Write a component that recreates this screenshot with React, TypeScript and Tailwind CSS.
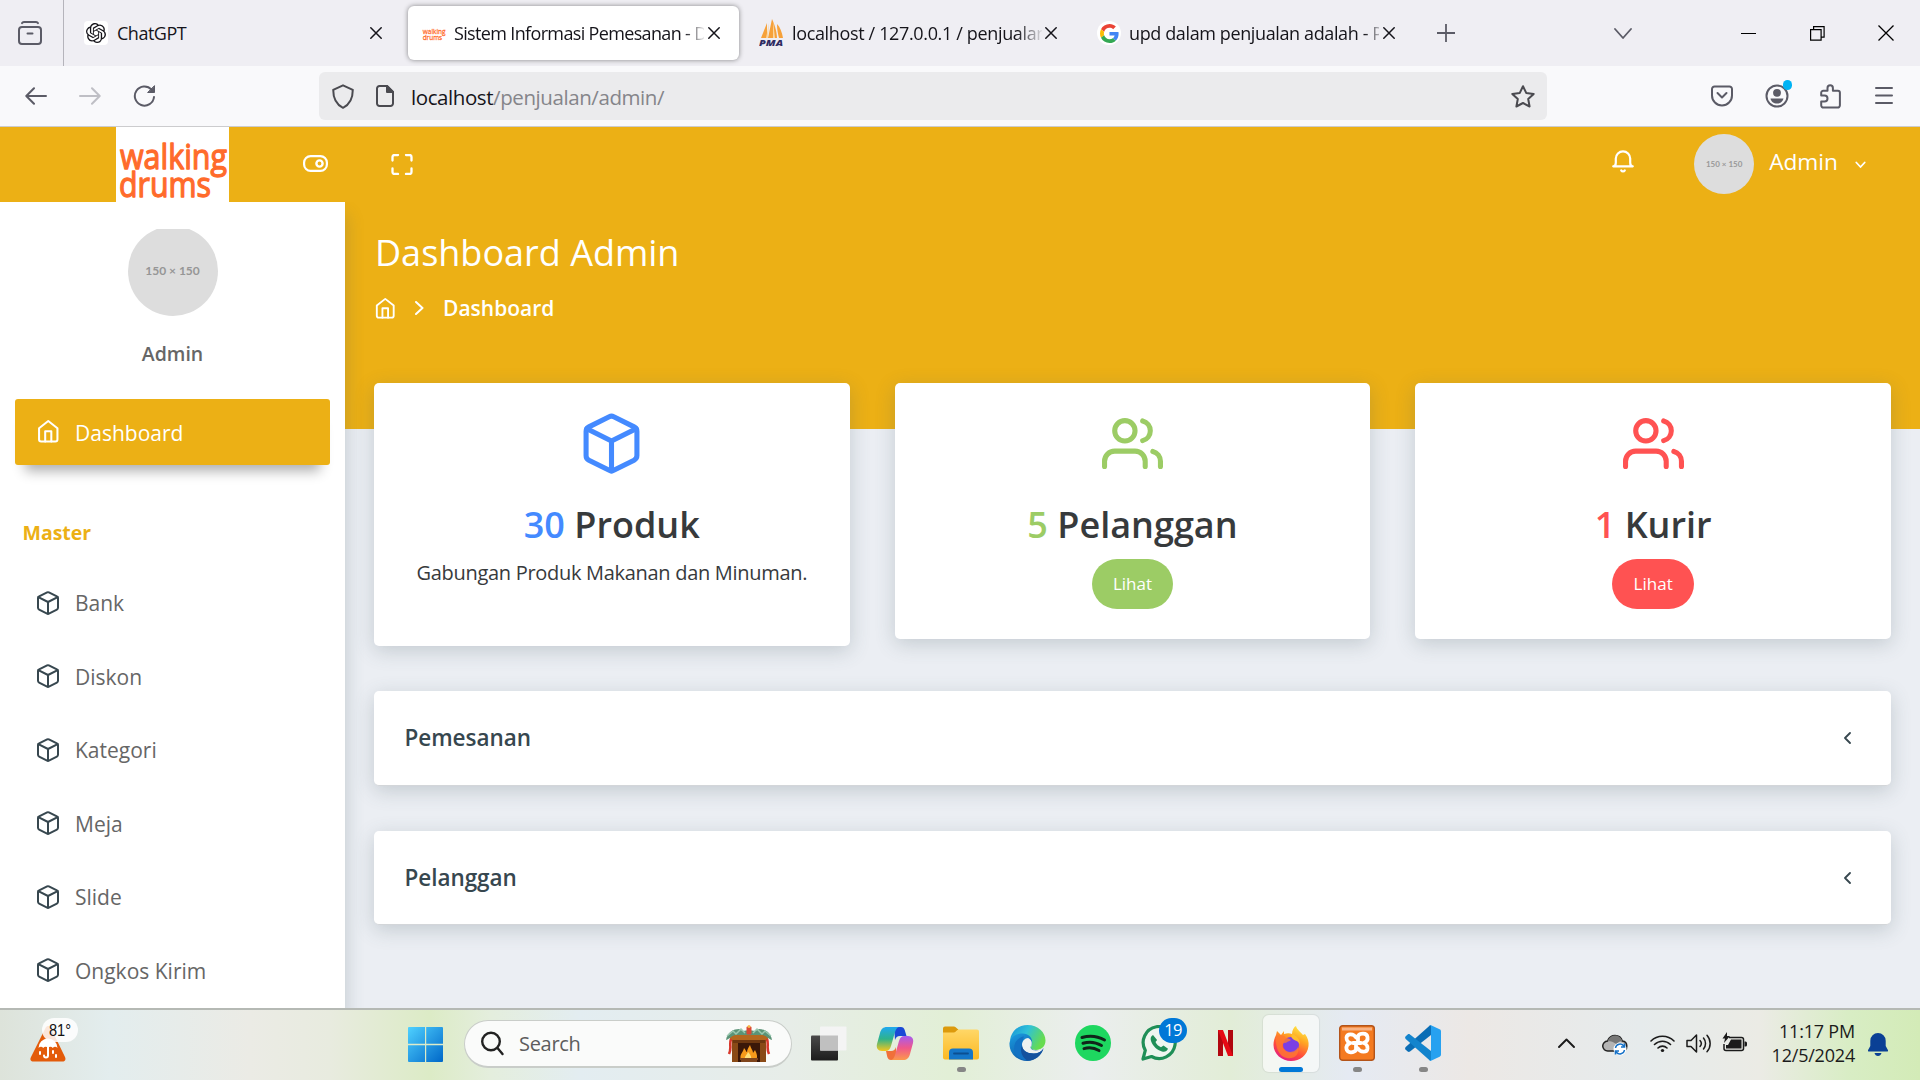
import React from 'react';

type IconProps = { size?: number; className?: string };

const Feather = ({ size = 24, className = '', sw = 2, children }: IconProps & { sw?: number; children: React.ReactNode }) => (
  <svg width={size} height={size} viewBox="0 0 24 24" fill="none" stroke="currentColor" strokeWidth={sw} strokeLinecap="round" strokeLinejoin="round" className={`shrink-0 ${className}`}>
    {children}
  </svg>
);

const BoxIcon = (p: IconProps) => (
  <Feather {...p}>
    <path d="M12.89 1.45l8 4A2 2 0 0 1 22 7.24v9.53a2 2 0 0 1-1.11 1.79l-8 4a2 2 0 0 1-1.79 0l-8-4a2 2 0 0 1-1.1-1.8V7.24a2 2 0 0 1 1.11-1.79l8-4a2 2 0 0 1 1.78 0z" />
    <path d="M2.32 6.16L12 11l9.68-4.84M12 22.76V11" />
  </Feather>
);

const HomeIcon = (p: IconProps) => (
  <Feather {...p}>
    <path d="M3 9l9-7 9 7v11a2 2 0 0 1-2 2H5a2 2 0 0 1-2-2z" />
    <path d="M9 22V12h6v10" />
  </Feather>
);

const UsersIcon = (p: IconProps) => (
  <Feather {...p}>
    <path d="M17 21v-2a4 4 0 0 0-4-4H5a4 4 0 0 0-4 4v2" />
    <circle cx="9" cy="7" r="4" />
    <path d="M23 21v-2a4 4 0 0 0-3-3.87M16 3.13a4 4 0 0 1 0 7.75" />
  </Feather>
);

const TabClose = ({ className = '' }: { className?: string }) => (
  <svg width="12" height="12" viewBox="0 0 12 12" className={`shrink-0 ${className}`} stroke="#15141a" strokeWidth="1.5" strokeLinecap="round">
    <path d="M.8.8l10.4 10.4M11.2.8L.8 11.2" />
  </svg>
);

const BrandLogo = ({ w, h, className = '' }: { w: number; h: number; className?: string }) => (
  <svg width={w} height={h} viewBox="0 0 113 75" className={`shrink-0 ${className}`} fill="#ff6b2b" stroke="#ff6b2b" strokeWidth="1.3" strokeLinejoin="round" fontFamily="Open Sans, sans-serif" fontWeight="500" fontSize="35.5">
    <text x="4" y="42" textLength="107" lengthAdjust="spacingAndGlyphs">walking</text>
    <text x="3" y="70" textLength="92" lengthAdjust="spacingAndGlyphs">drums</text>
  </svg>
);

function TabStrip() {
  return (
    <div className="flex h-[66px] items-center bg-[#efeef3] text-[18px] text-[#15141a]">
      <div className="flex h-full w-16 items-center border-r border-[#b5b4bb] pl-[18px]">
        <svg width="24" height="24" viewBox="0 0 24 24" fill="none" stroke="#5b5b66" strokeWidth="2" strokeLinecap="round">
          <path d="M4 2.200c.4-.9 1-1.200 2-1.200h12c1 0 1.600.3 2 1.200" />
          <rect x="1" y="6" width="22" height="17" rx="3" />
          <path d="M9.500 12.500h5" />
        </svg>
      </div>
      <div className="ml-5 flex w-[324px] items-center">
        <div className="grid h-6 w-6 shrink-0 place-items-center rounded bg-white">
          <svg width="20" height="20" viewBox="0 0 24 24" fill="#15141a">
            <path d="M22.282 9.821a5.985 5.985 0 0 0-.516-4.910 6.046 6.046 0 0 0-6.510-2.900A6.065 6.065 0 0 0 4.981 4.180a5.985 5.985 0 0 0-3.998 2.900 6.046 6.046 0 0 0 .743 7.097 5.980 5.980 0 0 0 .510 4.911 6.051 6.051 0 0 0 6.515 2.900A5.985 5.985 0 0 0 13.260 24a6.056 6.056 0 0 0 5.772-4.206 5.990 5.990 0 0 0 3.997-2.900 6.056 6.056 0 0 0-.747-7.073zM13.260 22.430a4.476 4.476 0 0 1-2.876-1.040l.141-.081 4.779-2.758a.795.795 0 0 0 .392-.681v-6.737l2.020 1.168a.071.071 0 0 1 .038.052v5.583a4.504 4.504 0 0 1-4.494 4.494zM3.600 18.304a4.470 4.470 0 0 1-.535-3.014l.142.085 4.783 2.759a.771.771 0 0 0 .780 0l5.843-3.369v2.332a.080.080 0 0 1-.033.062L9.740 19.950a4.500 4.500 0 0 1-6.140-1.646zM2.340 7.896a4.485 4.485 0 0 1 2.366-1.973V11.600a.766.766 0 0 0 .388.676l5.815 3.355-2.020 1.168a.076.076 0 0 1-.071 0l-4.830-2.786A4.504 4.504 0 0 1 2.340 7.872zm16.597 3.855l-5.833-3.387L15.119 7.200a.076.076 0 0 1 .071 0l4.830 2.791a4.494 4.494 0 0 1-.676 8.105v-5.678a.790.790 0 0 0-.407-.667zm2.010-3.023l-.141-.085-4.774-2.782a.776.776 0 0 0-.785 0L9.409 9.230V6.897a.066.066 0 0 1 .028-.061l4.830-2.787a4.500 4.500 0 0 1 6.680 4.660zm-12.640 4.135l-2.020-1.164a.080.080 0 0 1-.038-.057V6.075a4.500 4.500 0 0 1 7.375-3.453l-.142.080L8.704 5.460a.795.795 0 0 0-.393.681zm1.097-2.365l2.602-1.500 2.607 1.500v2.999l-2.597 1.500-2.607-1.500z" />
          </svg>
        </div>
        <span className="ml-[9px] flex-1 tracking-[-0.5px]">ChatGPT</span>
        <TabClose className="mr-[26px]" />
      </div>
      <div className="flex h-[54px] w-[331px] items-center rounded-[6px] bg-white pl-[14px] shadow-[0_0_5px_rgba(0,0,0,0.45)]">
        <BrandLogo w={24} h={16} />
        <span className="ml-2 w-[250px] overflow-hidden whitespace-nowrap tracking-[-0.65px] [mask-image:linear-gradient(to_right,#000_230px,transparent_252px)]">Sistem Informasi Pemesanan - D</span>
        <TabClose className="ml-1" />
      </div>
      <div className="ml-5 flex w-[320px] items-center">
        <svg width="25" height="28" viewBox="0 0 25 28" className="shrink-0">
          <path d="M8 4L2 19h6zM13 0L9 19h9C18 12 15 4 13 0zM18 5c0 6 1 10 2 14h4C23 13 21 8 18 5z" fill="#f6a13a" />
          <path d="M10 4L7 19h2zM14 2v17h2z" fill="#fbd6a0" />
          <text x="0" y="27" fontSize="9.500" fontWeight="800" fontStyle="italic" fontFamily="Open Sans, sans-serif" fill="#2f2c62" textLength="24" lengthAdjust="spacingAndGlyphs">PMA</text>
        </svg>
        <span className="ml-2 w-[250px] overflow-hidden whitespace-nowrap tracking-[-0.35px] [mask-image:linear-gradient(to_right,#000_225px,transparent_252px)]">localhost / 127.0.0.1 / penjualan</span>
        <TabClose className="ml-[3px]" />
      </div>
      <div className="ml-[18px] flex w-[320px] items-center">
        <div className="grid h-6 w-6 shrink-0 place-items-center rounded-full bg-white">
          <svg width="19" height="19" viewBox="0 0 48 48">
            <path fill="#ea4335" d="M24 9.500c3.540 0 6.710 1.220 9.210 3.600l6.850-6.850C35.900 2.380 30.470 0 24 0 14.620 0 6.510 5.380 2.560 13.220l7.980 6.190C12.430 13.720 17.740 9.500 24 9.500z" />
            <path fill="#4285f4" d="M46.980 24.550c0-1.570-.15-3.090-.38-4.550H24v9.020h12.940c-.58 2.960-2.260 5.480-4.780 7.180l7.730 6c4.510-4.180 7.090-10.360 7.090-17.650z" />
            <path fill="#fbbc05" d="M10.530 28.590c-.48-1.450-.76-2.990-.76-4.590s.27-3.140.76-4.590l-7.980-6.190C.92 16.460 0 20.120 0 24s.92 7.540 2.560 10.780l7.970-6.190z" />
            <path fill="#34a853" d="M24 48c6.480 0 11.930-2.130 15.890-5.810l-7.730-6c-2.150 1.450-4.920 2.300-8.160 2.300-6.260 0-11.570-4.220-13.470-9.910l-7.980 6.190C6.510 42.620 14.620 48 24 48z" />
          </svg>
        </div>
        <span className="ml-2 w-[250px] overflow-hidden whitespace-nowrap tracking-[-0.38px] [mask-image:linear-gradient(to_right,#000_235px,transparent_256px)]">upd dalam penjualan adalah - P</span>
        <TabClose className="ml-1" />
      </div>
      <svg width="18" height="18" viewBox="0 0 18 18" className="ml-[20px] shrink-0" stroke="#5b5b66" strokeWidth="1.800"><path d="M9 0v18M0 9h18" /></svg>
      <svg width="18" height="11" viewBox="0 0 18 11" className="ml-[159px] shrink-0" stroke="#5b5b66" strokeWidth="1.800" fill="none" strokeLinecap="round" strokeLinejoin="round"><path d="M1 1l8 9 8-9" /></svg>
      <div className="ml-[109px] h-px w-[15px] shrink-0 bg-black" />
      <svg width="15" height="15" viewBox="0 0 15 15" className="ml-[54px] shrink-0" stroke="#000" strokeWidth="1.200" fill="none"><path d="M.6 3.600h10.500v10.500H.6zM3.600 3.600V.6h10.500v10.500h-3" /></svg>
      <svg width="16" height="16" viewBox="0 0 16 16" className="ml-[53px] shrink-0" stroke="#000" strokeWidth="1.300"><path d="M.5.500l15 15M15.500.500l-15 15" /></svg>
    </div>
  );
}

function Toolbar() {
  return (
    <div className="flex h-[61px] items-center border-b border-[#ccccce] bg-[#f9f9fb] text-[#5b5b66]">
      <svg width="22" height="18" viewBox="0 0 22 18" className="ml-[25px] shrink-0" stroke="currentColor" strokeWidth="2" fill="none" strokeLinecap="round" strokeLinejoin="round"><path d="M21 9H1.500M9 1.200L1.300 9 9 16.800" /></svg>
      <svg width="22" height="18" viewBox="0 0 22 18" className="ml-8 shrink-0 text-[#bfbfc5]" stroke="currentColor" strokeWidth="2" fill="none" strokeLinecap="round" strokeLinejoin="round"><path d="M1 9h19.500M13 1.200L20.700 9 13 16.800" /></svg>
      <svg width="23" height="22" viewBox="0 0 23 22" className="ml-8 shrink-0" stroke="currentColor" strokeWidth="2" fill="none" strokeLinecap="round"><path d="M18.500 4.500A9.600 9.600 0 1 0 21 12" /><path d="M21.500 1v6.500H15z" fill="currentColor" strokeWidth="1" strokeLinejoin="round" /></svg>
      <div className="ml-[163px] flex h-12 w-[1228px] items-center rounded-[6px] bg-[#ebebed] pl-[13px] text-[#4a4a50]">
        <svg width="22" height="25" viewBox="0 0 22 25" className="shrink-0" stroke="currentColor" strokeWidth="2" fill="none" strokeLinejoin="round"><path d="M11 1.300L1.200 5.800C1.200 14 4 20.500 11 23.800 18 20.500 20.800 14 20.800 5.800z" /></svg>
        <svg width="18" height="22" viewBox="0 0 18 22" className="ml-[22px] shrink-0" stroke="currentColor" strokeWidth="2" fill="none" strokeLinejoin="round"><path d="M3.500 1H11l6 6v11.500a2.500 2.500 0 0 1-2.500 2.500h-11A2.500 2.500 0 0 1 1 18.500v-15A2.500 2.500 0 0 1 3.500 1z" /><path d="M11 1v6h6z" fill="currentColor" /></svg>
        <div className="ml-[17px] flex-1 pt-[2px] text-[20.500px] tracking-[-0.42px] text-[#85858a]"><span className="text-[#15141a]">localhost</span>/penjualan/admin/</div>
        <svg width="24" height="23" viewBox="0 0 24 23" className="mr-3 shrink-0" stroke="currentColor" strokeWidth="2" fill="none" strokeLinejoin="round"><path d="M12 1.200l3.200 6.700 7.500 1-5.500 5.100 1.400 7.500L12 18l-6.600 3.500L6.800 14 1.300 8.900l7.500-1z" /></svg>
      </div>
      <svg width="22" height="22" viewBox="0 0 22 22" className="ml-[164px] shrink-0" stroke="currentColor" strokeWidth="2" fill="none" strokeLinecap="round" strokeLinejoin="round"><path d="M3.500 1.500h15A2.500 2.500 0 0 1 21 4v6.500a10 10 0 0 1-20 0V4a2.500 2.500 0 0 1 2.500-2.500z" /><path d="M6.500 8l4.500 4.500L15.500 8" /></svg>
      <div className="relative ml-8 h-6 w-6 shrink-0">
        <svg width="24" height="24" viewBox="0 0 24 24" fill="none"><circle cx="12" cy="12" r="10.500" stroke="currentColor" strokeWidth="2" /><circle cx="12" cy="8.800" r="3.900" fill="currentColor" /><path d="M5.500 14.500h13c-.5 3-3 5-6.500 5s-6-2-6.500-5z" fill="currentColor" /></svg>
        <div className="absolute -top-[4px] left-[18px] h-[10px] w-[9px] rounded-full bg-[#00b3f4]" />
      </div>
      <svg width="21" height="25" viewBox="0 0 21 25" className="ml-[31px] shrink-0" stroke="currentColor" strokeWidth="2" fill="none" strokeLinejoin="round"><path d="M1.200 11.500V8.800a2 2 0 0 1 2-2h4.300V4a2.700 2.700 0 0 1 5.400 0v2.800h5a2 2 0 0 1 2 2v12.500a2.300 2.300 0 0 1-2.300 2.300H3.500a2.300 2.300 0 0 1-2.300-2.300v-3.800h3.300a3 3 0 0 0 0-6z" /></svg>
      <svg width="18" height="18" viewBox="0 0 18 18" className="ml-[34px] shrink-0" stroke="currentColor" strokeWidth="2" strokeLinecap="round"><path d="M1 1h16M1 8.500h16M1 16h16" /></svg>
    </div>
  );
}

const NAV = ['Bank', 'Diskon', 'Kategori', 'Meja', 'Slide', 'Ongkos Kirim'];

function Sidebar() {
  return (
    <aside className="relative z-10 flex w-[345px] shrink-0 flex-col bg-white shadow-[1px_14px_16px_1px_rgba(69,90,100,0.22)]">
      <div className="mx-auto mt-[27px] h-[87px] w-[90px] overflow-hidden">
        <div className="-mt-[3px] grid h-[90px] w-[90px] place-items-center rounded-full bg-[#ddd] font-[Lato] text-[12px] font-bold text-[#969696]">150 × 150</div>
      </div>
      <div className="mt-[23px] text-center text-[19.500px] leading-[30px] font-semibold text-[#666]">Admin</div>
      <div className="mx-[15px] mt-[30px] flex h-[66px] items-center rounded-[3px] bg-[#ecb015] pl-[21px] text-[21px] text-white shadow-[0_16px_12px_-10px_rgba(0,0,0,0.32)]">
        <HomeIcon size={24.5} className="mt-[-1px]" />
        <span className="ml-[14.500px] pt-[3px]">Dashboard</span>
      </div>
      <div className="mt-[53px] mb-[19px] pl-[22.500px] text-[19.500px] leading-[30px] font-bold text-[#ecb015]">Master</div>
      {NAV.map((n) => (
        <div key={n} className="flex h-[73.5px] shrink-0 items-center pl-9 text-[21px] text-[#666]">
          <BoxIcon size={24} className="mt-[-2px] text-[#37474f]" />
          <span className="ml-[15px]">{n}</span>
        </div>
      ))}
    </aside>
  );
}

const cardShadow = 'shadow-[0_5px_20px_rgba(69,90,100,0.24)]';

function StatCard({ count, label, tone, icon, children, tall }: { count: string; label: string; tone: string; icon: React.ReactNode; children: React.ReactNode; tall?: boolean }) {
  return (
    <div className={`flex flex-col items-center rounded-[5px] bg-white pt-[30px] ${tall ? 'h-[263px]' : 'h-[256px]'} ${cardShadow}`}>
      <div className={`h-[61px] ${tone}`}>{icon}</div>
      <div className="mt-[30px] text-[36px] leading-[42px] font-semibold text-[#373a3c]">
        <span className={tone}>{count}</span> {label}
      </div>
      {children}
    </div>
  );
}

function Panel({ title, height }: { title: string; height: string }) {
  return (
    <div className={`flex ${height} items-center justify-between rounded-[5px] border-b border-[#d3d6d9] bg-white pr-[39.500px] pl-[30.500px] ${cardShadow}`}>
      <h5 className="text-[22.500px] font-semibold tracking-[-0.05px] text-[#37474f]">{title}</h5>
      <svg width="9" height="12" viewBox="0 0 9 12" fill="none" stroke="#37474f" strokeWidth="1.800" strokeLinecap="round" strokeLinejoin="round"><path d="M7 1L2 6l5 5" /></svg>
    </div>
  );
}

function Main() {
  return (
    <main className="min-w-0 flex-1 bg-[linear-gradient(#ecb015_227px,#ebeef3_227px)] pr-[29px] pl-[29px]">
      <h1 className="pt-[25px] pl-px text-[36px] leading-[52px] font-normal text-white">Dashboard Admin</h1>
      <div className="mt-[14px] flex h-[30px] items-center text-white">
        <HomeIcon size={22.5} />
        <svg width="9" height="14" viewBox="0 0 9 14" className="ml-[18.500px]" fill="none" stroke="currentColor" strokeWidth="2" strokeLinecap="round" strokeLinejoin="round"><path d="M1 1l6.500 6L1 13" /></svg>
        <span className="ml-[19px] pt-[2px] text-[21px] font-semibold">Dashboard</span>
      </div>
      <div className="mt-[60px] grid grid-cols-3 items-start gap-x-[45px]">
        <StatCard count="30" label="Produk" tone="text-[#448aff]" icon={<BoxIcon size={61} />} tall>
          <p className="mt-[12px] text-[20px] leading-[30px] tracking-[-0.3px] text-[#373a3c]">Gabungan Produk Makanan dan Minuman.</p>
        </StatCard>
        <StatCard count="5" label="Pelanggan" tone="text-[#9ccc65]" icon={<UsersIcon size={61} />}>
          <button className="mt-[13px] h-[50px] w-[81px] rounded-full bg-[#9ccc65] text-[17px] text-white">Lihat</button>
        </StatCard>
        <StatCard count="1" label="Kurir" tone="text-[#ff5252]" icon={<UsersIcon size={61} />}>
          <button className="mt-[13px] h-[50px] w-[82px] rounded-full bg-[#ff5252] text-[17px] text-white">Lihat</button>
        </StatCard>
      </div>
      <div className="mt-[45px] flex flex-col gap-[45px]">
        <Panel title="Pemesanan" height="h-[95px]" />
        <Panel title="Pelanggan" height="h-[94px]" />
      </div>
    </main>
  );
}

function AppHeader() {
  return (
    <header className="flex h-[75px] shrink-0 bg-[#ecb015] text-white">
      <div className="flex w-[345px] pl-[116px]">
        <BrandLogo w={113} h={75} className="bg-white" />
        <svg width="25" height="17" viewBox="0 0 25 17" className="mt-[28px] ml-[73.500px] shrink-0" fill="none" stroke="currentColor" strokeWidth="2.200"><rect x="1.100" y="1.100" width="22.800" height="14.800" rx="6.500" /><circle cx="16.500" cy="8.500" r="3.100" strokeWidth="2.400" /></svg>
      </div>
      <svg width="22" height="21" viewBox="0 0 22 21" className="mt-[27px] ml-[45.500px] shrink-0" fill="none" stroke="currentColor" strokeWidth="2.300" strokeLinecap="round"><path d="M1.500 6.500V3a2 2 0 0 1 2-2H7M15 1h3.500a2 2 0 0 1 2 2v3.500M20.500 14.500V18a2 2 0 0 1-2 2H15M7 20H3.500a2 2 0 0 1-2-2v-3.500" /></svg>
      <svg width="22" height="23" viewBox="0 0 22 23" className="mt-[23px] ml-auto shrink-0" fill="none" stroke="currentColor" strokeWidth="2.200" strokeLinecap="round" strokeLinejoin="round"><path d="M1.200 16.300c1.800 0 2.600-1.500 2.600-3.500V8.500a7.200 7.200 0 0 1 14.400 0v4.300c0 2 .8 3.500 2.600 3.500zM9.200 20.400c.9 1.400 2.700 1.400 3.600 0" /></svg>
      <div className="mt-[7px] ml-[60px] grid h-[60px] w-[60px] place-items-center rounded-full bg-[#ddd] font-[Lato] text-[8px] font-bold text-[#999]">150 × 150</div>
      <span className="mt-[16px] ml-[15px] text-[22.700px] leading-[38px]">Admin</span>
      <svg width="11" height="8" viewBox="0 0 11 8" className="mt-[34px] mr-[54px] ml-[17px] shrink-0" fill="none" stroke="currentColor" strokeWidth="1.800" strokeLinecap="round" strokeLinejoin="round"><path d="M1.300 1.500l4.200 4.500 4.200-4.500" /></svg>
    </header>
  );
}

const Cell = ({ children, dot, active }: { children: React.ReactNode; dot?: boolean; active?: boolean }) => (
  <div className={`relative mx-[5px] mt-[5px] flex h-[57px] w-14 shrink-0 items-center justify-center rounded-[6px] pb-px ${active ? 'bg-white/60 shadow-[0_0_1px_1px_rgba(0,0,0,0.06)]' : ''}`}>
    {children}
    {dot && <div className="absolute bottom-0 left-6 h-[5px] w-[9px] rounded-full bg-[#868686]" />}
    {active && <div className="absolute bottom-0 left-4 h-[5px] w-6 rounded-full bg-[#0078d7]" />}
  </div>
);

function Taskbar() {
  return (
    <footer className="flex h-[72px] shrink-0 items-start border-t-2 border-[#b5b9b4] bg-[linear-gradient(to_right,#dde3da_0px,#e3edee_110px,#ebebe5_250px,#e8ebdf_330px,#dcebc6_430px,#e4eedd_490px,#e3edf1_580px,#e7ede8_790px,#e2efd6_950px,#ebeeee_1090px,#e2edd7_1230px,#e5eaf3_1350px,#ece8e5_1470px,#e6ebec_1640px,#ebebe5_1760px,#d8edc4_1850px,#d3ebb7_1920px)]">
      <svg width="52" height="50" viewBox="0 0 52 50" className="mt-[4px] ml-7 shrink-0">
        <path d="M17.500 14c1.400-2.600 4-2.600 5.400 0L37 43c1.200 2.500 0 4.500-2.500 4.500h-29C2.800 47.500 1.600 45.500 3 43z" fill="#e35b0a" />
        <path d="M10.500 34a9.500 9.500 0 0 1 19 0c-1.500-1.700-3.500-1.700-4.700 0-1.300-1.700-3.500-1.700-4.800 0-1.300-1.700-3.500-1.700-4.800 0-1.200-1.700-3.200-1.700-4.700 0z" fill="#fff" />
        <path d="M20 33v8.500a2 2 0 0 1-4 0M12 38v2M25 37v2M28 41v2" stroke="#fff" strokeWidth="2" fill="none" strokeLinecap="round" />
        <rect x="14" y="4" width="36" height="24" rx="12" fill="#fff" fillOpacity=".85" />
        <text x="21" y="21.500" fontSize="16" fontFamily="Liberation Sans, sans-serif" fill="#111" textLength="22" lengthAdjust="spacingAndGlyphs">81°</text>
      </svg>
      <svg width="35" height="35" viewBox="0 0 35 35" className="mt-[17px] ml-[328px] shrink-0">
        <defs><linearGradient id="win" x1="0" y1="0" x2="1" y2="1"><stop offset="0" stopColor="#4fd1ff" /><stop offset="1" stopColor="#0067c8" /></linearGradient></defs>
        <path d="M1 0h16v16.700H0V1a1 1 0 0 1 1-1zM18.200 0H34a1 1 0 0 1 1 1v15.700H18.200zM0 18.200h17V35H1a1 1 0 0 1-1-1zM18.200 18.200H35V34a1 1 0 0 1-1 1H18.200z" fill="url(#win)" />
      </svg>
      <div className="mt-[10px] ml-[21px] flex h-[48px] w-[328px] shrink-0 items-center rounded-full border border-b-2 border-[#c9cdc9] bg-[#fafbfa] pl-[15px]">
        <svg width="24" height="25" viewBox="0 0 24 25" fill="none" stroke="#222" strokeWidth="2.400" strokeLinecap="round"><circle cx="11" cy="10.500" r="8.800" /><path d="M17.500 17l5 6" /></svg>
        <span className="ml-[15px] flex-1 pt-px text-[20px] tracking-[-0.3px] text-[#5d5d5d]">Search</span>
        <svg width="48" height="38" viewBox="0 0 48 38" className="mr-[18px] shrink-0">
          <rect x="7" y="10" width="34" height="27" fill="#8a4a16" />
          <rect x="5" y="9" width="38" height="6" rx="1" fill="#b4681f" />
          <rect x="8" y="15" width="32" height="3" fill="#6e3710" />
          <rect x="13" y="18" width="22" height="19" fill="#3b1708" />
          <path d="M16 35c-2-6 2-7 3-12 2 2 2 4 3 4 0-3 2-5 3-7 1 4 3 5 3 8l2-3c2 4 3 7 1 10z" fill="#f79a1b" />
          <path d="M20 35c-1-4 2-5 3-8 2 2 4 5 3 8z" fill="#ffe07a" />
          <path d="M15 34h18M16 36h16" stroke="#80451c" strokeWidth="2" />
          <path d="M1 15C2 7 9 4 14 4l4 2 6-1 6 1 4-2c5 0 12 3 13 11-4-1-6-5-10-5H11c-4 0-6 4-10 5z" fill="#5b9377" />
          <path d="M2 11l6-5 3 3 5-5 4 4M46 11l-6-5-3 3-5-5-4 4" stroke="#9cc9b0" strokeWidth="1.500" fill="none" />
          <rect x="21.500" y="1.500" width="5" height="8" rx="1" fill="#d94835" />
          <circle cx="24" cy="1.500" r="1.500" fill="#f9b84a" />
          <path d="M6 14c-2 6 1 9-2 15M42 14c2 6-1 9 2 15" stroke="#d8382c" strokeWidth="2.600" fill="none" />
        </svg>
      </div>
      <div className="ml-[4px] flex">
        <Cell>
          <svg width="36" height="35" viewBox="0 0 36 35"><defs><linearGradient id="tv" x1="0" y1="0" x2="0" y2="1"><stop offset="0" stopColor="#4a4a4a" /><stop offset="1" stopColor="#1c1c1c" /></linearGradient></defs><rect x="0" y="9.500" width="27" height="25" rx="1" fill="url(#tv)" /><rect x="9" y=".5" width="26.500" height="24" rx="1" fill="#f4f4f4" /><path d="M9 9.500h18v15H9z" fill="#c0c0c0" /></svg>
        </Cell>
        <Cell>
          <svg width="38" height="35" viewBox="0 0 38 35">
            <defs>
              <linearGradient id="cp1" x1="0" y1="0" x2="0" y2="1"><stop offset="0" stopColor="#1fa8f0" /><stop offset=".5" stopColor="#2fb38a" /><stop offset="1" stopColor="#f5c61d" /></linearGradient>
              <linearGradient id="cp2" x1="0" y1="0" x2="0" y2="1"><stop offset="0" stopColor="#a65bf0" /><stop offset=".5" stopColor="#f0588a" /><stop offset="1" stopColor="#fb9a4b" /></linearGradient>
            </defs>
            <path d="M18 1h7c2 0 3 1 3.700 3l1.800 6h-6.500c-3 0-4 1.500-5 4z" fill="#1a49d6" />
            <path d="M20 34h-5c-2 0-3-1-3.700-3l-1.300-6h5c3 0 4-1.500 5-4z" fill="#f0703a" />
            <path d="M11 1h13c-3 0-4 2-5 5l-4 14c-1 3.500-2.500 5-5.500 5H6c-4 0-6-3-5-7L4 7c1.200-4 3-6 7-6z" fill="url(#cp1)" />
            <path d="M27 34H14c3 0 4-2 5-5l4-14c1-3.500 2.500-5 5.500-5H32c4 0 6 3 5 7l-3 11c-1.200 4-3 6-7 6z" fill="url(#cp2)" />
          </svg>
        </Cell>
        <Cell dot>
          <svg width="36" height="34" viewBox="0 0 36 33"><defs><linearGradient id="fx" x1="0" y1="0" x2="0" y2="1"><stop offset="0" stopColor="#ffd767" /><stop offset="1" stopColor="#fbb924" /></linearGradient></defs><path d="M0 2a2 2 0 0 1 2-2h9c2 0 3 3 5 3h-1v5H0z" fill="#dc9a0c" /><path d="M0 6h11c2 0 2.500-3 5-3h18a2 2 0 0 1 2 2v26a2 2 0 0 1-2 2H2a2 2 0 0 1-2-2z" fill="url(#fx)" /><path d="M6 33v-7a4 4 0 0 1 4-4h16a4 4 0 0 1 4 4v7z" fill="#1476c8" /><path d="M11 27h14" stroke="#0b4f91" strokeWidth="1.800" strokeLinecap="round" /></svg>
        </Cell>
        <Cell>
          <svg width="37" height="36" viewBox="0 0 37 36">
            <defs>
              <linearGradient id="eg1" x1="0" y1="0" x2="1" y2=".4"><stop offset="0" stopColor="#1690d8" /><stop offset=".5" stopColor="#2fc1d8" /><stop offset="1" stopColor="#66dc4f" /></linearGradient>
              <linearGradient id="eg2" x1="0" y1="0" x2=".6" y2="1"><stop offset="0" stopColor="#1b9de0" /><stop offset="1" stopColor="#0d56a6" /></linearGradient>
            </defs>
            <path d="M1 16C2 6 9.500 0 18.500 0 29 0 36.500 7.500 36.500 15.500c0 6-4.500 9.500-9.500 9.500-4 0-6-1.500-5-3 2.500-4-.5-9.500-7-9.500-5 0-10.500 1-14 3.500z" fill="url(#eg1)" />
            <path d="M.5 18C2 11 8 8.500 13.500 8.500 20 8.500 24 13 23 19c-.4 2-1.800 2.500-1 4 1 2 4 2.500 7 2.200 2 0 4-1 5.500-2C33 30 26 36 18 36 8 36 0 28 .5 18z" fill="url(#eg2)" />
            <path d="M13 19c-2 8 4 14.500 11 15.500-12 4-22-5-18-16 1.500-4 6-7 9-7-1 2-1.500 5-2 7.500z" fill="#1272c4" />
            <path d="M13 20c0-4 3-7 6-7 3 1.500 4.500 4 3.500 7-.5 1.500-1.500 2-.7 3.300 1.800 3.200 8.500 2.700 12.700-.3-2 4-5.500 5.500-10 5.500C18 28.500 13 25 13 20z" fill="#eef1f0" />
            <path d="M13 20c0 5 5 8.500 11.500 8.500 4.500 0 8-1.500 10-5C32 31 25 36 18 35.500 12 31 11 25 13 20z" fill="#14519e" />
          </svg>
        </Cell>
        <Cell>
          <svg width="36" height="36" viewBox="0 0 36 36"><circle cx="18" cy="18" r="18" fill="#1ed760" /><path d="M7 12.500c7-2 16-1.200 22.500 2.500M8 18.200c6-1.800 13-1 18.500 2.300M9 23.600c5-1.500 10.500-.8 15 2" stroke="#10251a" strokeWidth="3" fill="none" strokeLinecap="round" /></svg>
        </Cell>
        <Cell>
          <svg width="36" height="36" viewBox="0 0 36 36"><path d="M2 34l2.300-8.600A16 16 0 1 1 10.500 31.500z" fill="#eef6ef" stroke="#1f8f57" strokeWidth="3.200" strokeLinejoin="round" /><path d="M12 10c-2 1-3 3-2 6 2 5.500 6 9 11 10.500 3 .8 5-.5 6-2.700l-4.500-3.300-2.500 1.800c-2.500-1-4.300-3-5.500-5.300l1.600-2z" fill="#1f8f57" /></svg>
          <div className="absolute top-[3px] left-[28px] grid h-[25px] w-7 place-items-center rounded-full bg-[#0078d7] text-[16.500px] leading-none tracking-[-0.8px] text-white">19</div>
        </Cell>
        <Cell>
          <svg width="15" height="26" viewBox="0 0 15 26"><path d="M0 0h5v26H0zM10 0h5v26h-5z" fill="#b1060f" /><path d="M0 0h5l10 26h-5z" fill="#e50914" /></svg>
        </Cell>
        <Cell active>
          <svg width="36" height="36" viewBox="0 0 36 36">
            <defs><linearGradient id="ff" x1=".8" y1="0" x2=".3" y2="1"><stop offset="0" stopColor="#fff04a" /><stop offset=".35" stopColor="#ffa523" /><stop offset=".7" stopColor="#ff4a3c" /><stop offset="1" stopColor="#e21b87" /></linearGradient></defs>
            <path d="M3 10l1-4 4 4 3-4v3c3-1 6-1 8 0 0-4 2-7 4-8 1 4 5 6 7 9l2-1c3 4 4 8 3.500 12C34.500 30 27 36 18 36S.5 29 .5 20C.500 16 1.500 13 3 10z" fill="url(#ff)" />
            <circle cx="18" cy="20" r="8" fill="#7b3fe4" />
            <path d="M3 12c4-3 9-2 10 1 2 0 4 1 5 2-2 2-4 1-5 3-3-1-5 3-2 6 4 5 12 3 14-2 2 9-5 12-11 11C6 32 2 22 3 12z" fill="#ff7a2e" fillOpacity=".8" />
            <path d="M19 9c4 1 8 5 8 10-3-4-5-3-7-5-2-1-2-3-1-5z" fill="#ffbd2e" />
          </svg>
        </Cell>
        <Cell dot>
          <svg width="36" height="36" viewBox="0 0 36 36"><rect x=".7" y=".7" width="34.600" height="34.600" rx="3" fill="#f47a20" stroke="#b3541a" strokeWidth="1.400" /><path d="M3 2.500h30v3H3z" fill="#f9b384" /><path d="M17 12.500c-2-4-9-4.500-9.500 0-.2 3 2 5 4 5.500-3 1-4.500 3-4 6 .8 4.500 7.500 4 9.500 1v-4.500M19 23.500c2 4 9 4.500 9.500 0 .2-3-2-5-4-5.500 3-1 4.500-3 4-6-.8-4.500-7.500-4-9.500-1v4.500M14 18h8" fill="none" stroke="#fff" strokeWidth="3.800" strokeLinecap="round" strokeLinejoin="round" /></svg>
        </Cell>
        <Cell dot>
          <svg width="36" height="36" viewBox="0 0 36 36"><path d="M26 0v10L5 26.500c-.8.600-1.600.600-2.300 0l-2-1.800c-.8-.8-.8-1.800 0-2.600L24.500.8z" fill="#0a6db5" /><path d="M26 36V26L5 9.500c-.8-.6-1.600-.6-2.300 0l-2 1.800c-.8.800-.8 1.800 0 2.600l23.800 21.300z" fill="#1384cd" /><path d="M26 .2l8.600 4c.9.400 1.400 1.200 1.400 2.200v23.200c0 1-.5 1.800-1.400 2.200l-8.600 4c-1.200.5-2 .2-2.600-.4 1.200 1 2.600.2 2.600-1.100V1.700c0-1.300-1.400-2.100-2.600-1.100.6-.6 1.400-.9 2.600-.4z" fill="#27a1f0" /></svg>
        </Cell>
      </div>
      <svg width="17" height="10" viewBox="0 0 17 10" className="mt-[28px] ml-[102px] shrink-0" stroke="#1b1b1b" strokeWidth="1.900" fill="none" strokeLinecap="round" strokeLinejoin="round"><path d="M1 9l7.500-7.500L16 9" /></svg>
      <svg width="26" height="22" viewBox="0 0 26 22" className="mt-[24px] ml-[27px] shrink-0"><path d="M6 17a5 5 0 0 1-.5-10C7 3.500 9.500 1.500 13 1.500c4 0 6.500 2.500 7.300 5.500 3 .3 4.500 2.500 4.500 5 0 3-2 5-5 5z" fill="#b5b5b5" stroke="#222" strokeWidth="1.500" /><path d="M5.500 7C7 3.500 9.500 1.500 13 1.500c4 0 6.500 2.500 7.300 5.500-3 0-3.500 1-6 3-3-2-5-3-8.800-3z" fill="#777" /><circle cx="18" cy="15" r="6.500" fill="#fff" /><path d="M13.500 14a4.600 4.600 0 0 1 8.300-2M22.500 16a4.600 4.600 0 0 1-8.300 2M22.500 9.500V13H19M13.500 20.500V17H17" stroke="#1672c8" strokeWidth="1.500" fill="none" /></svg>
      <svg width="25" height="19" viewBox="0 0 25 19" className="mt-[24px] ml-[22px] shrink-0" stroke="#1b1b1b" strokeWidth="1.600" fill="none" strokeLinecap="round"><path d="M1 7a16.300 16.300 0 0 1 23 0M4.500 10.500a11.300 11.300 0 0 1 16 0M8 14a6.400 6.400 0 0 1 9 0" /><circle cx="12.500" cy="16.500" r="1.500" fill="#1b1b1b" stroke="none" /><path d="M11.500 16.500h2" /></svg>
      <svg width="26" height="21" viewBox="0 0 26 21" className="mt-[23px] ml-[11px] shrink-0" stroke="#1b1b1b" strokeWidth="1.500" fill="none" strokeLinecap="round" strokeLinejoin="round"><path d="M1 7.500h4l5.500-5.500v17L5 13.500H1z" /><path d="M14 7.500a4.500 4.500 0 0 1 0 6M17.500 5a8.500 8.500 0 0 1 0 11M21 2.200a12.500 12.500 0 0 1 0 16.600" /></svg>
      <svg width="25" height="20" viewBox="0 0 25 20" className="mt-[22px] ml-[10px] shrink-0"><path d="M7 5.500h12.500a2 2 0 0 1 2 2v9a2 2 0 0 1-2 2H4a2 2 0 0 1-2-2V12" stroke="#1b1b1b" strokeWidth="1.500" fill="none" /><path d="M9 7.500h10.500v9H4V13h2z" fill="#1b1b1b" /><path d="M22.500 9.500h1a1.500 1.500 0 0 1 1.500 1.500v2a1.500 1.500 0 0 1-1.500 1.500h-1z" fill="#1b1b1b" /><path d="M5 0L.5 6.500H3L2 11l6-7H5z" fill="#1b1b1b" /></svg>
      <div className="mt-[9px] ml-auto text-right text-[18px] leading-6 tracking-[-0.2px] text-[#1b1b1b]">
        <div>11:17 PM</div>
        <div>12/5/2024</div>
      </div>
      <svg width="20" height="23" viewBox="0 0 20 23" className="mt-[23px] mr-8 ml-[13px] shrink-0" fill="#0a4095"><path d="M10 0a7.700 7.700 0 0 1 7.700 7.700V13l2.200 4c.4.800 0 1.500-.8 1.500H.9c-.8 0-1.200-.7-.8-1.500l2.200-4V7.700A7.700 7.700 0 0 1 10 0zM6.500 20h7c-.5 1.800-1.800 3-3.500 3s-3-1.200-3.500-3z" /></svg>
    </footer>
  );
}

export default function App() {
  return (
    <div className="flex h-[1080px] w-[1920px] flex-col overflow-hidden font-['Open_Sans',sans-serif]">
      <TabStrip />
      <Toolbar />
      <AppHeader />
      <div className="flex h-[806px] shrink-0 overflow-hidden">
        <Sidebar />
        <Main />
      </div>
      <Taskbar />
    </div>
  );
}
